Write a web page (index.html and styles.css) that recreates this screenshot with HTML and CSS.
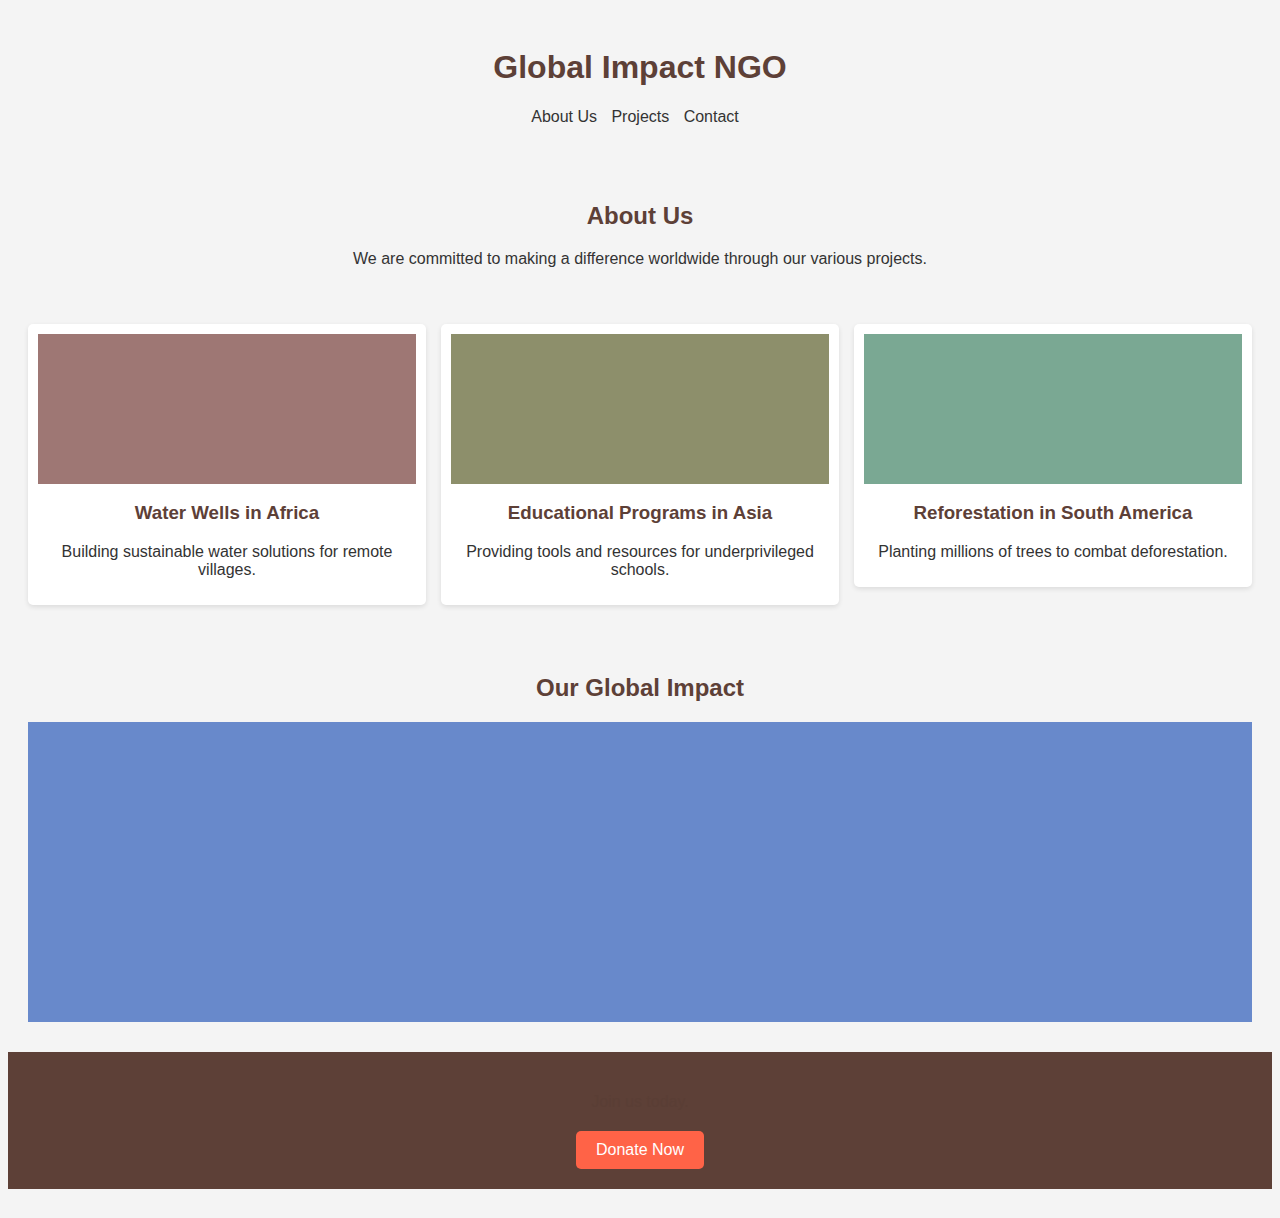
FILE: index.html
```html
<!DOCTYPE html>
<html lang="en">
<head>
<meta charset="utf-8">
<title>Global Impact NGO</title>
<link rel="stylesheet" href="styles.css">
</head>
<body>
<header class="site-header">
  <h1 class="site-title">Global Impact NGO</h1>
  <nav class="site-nav">
    <a href="#about">About Us</a>
    <a href="#projects">Projects</a>
    <a href="#contact">Contact</a>
  </nav>
</header>

<section class="about" id="about">
  <h2 class="section-title">About Us</h2>
  <p>We are committed to making a difference worldwide through our various projects.</p>
</section>

<section class="projects" id="projects">
  <div class="card">
    <div class="card-img img-red"></div>
    <h3 class="card-title">Water Wells in Africa</h3>
    <p class="card-text">Building sustainable water solutions for remote villages.</p>
  </div>
  <div class="card">
    <div class="card-img img-olive"></div>
    <h3 class="card-title">Educational Programs in Asia</h3>
    <p class="card-text">Providing tools and resources for underprivileged schools.</p>
  </div>
  <div class="card">
    <div class="card-img img-green"></div>
    <h3 class="card-title">Reforestation in South America</h3>
    <p class="card-text">Planting millions of trees to combat deforestation.</p>
  </div>
</section>

<section class="impact">
  <h2 class="section-title">Our Global Impact</h2>
  <div class="map"></div>
</section>

<footer class="site-footer" id="contact">
  <p class="footer-text">Join us today.</p>
  <button class="donate" type="button">Donate Now</button>
</footer>
</body>
</html>
```

FILE: styles.css
```css
body {
  margin: 8px;
  background: #f4f4f4;
  font-family: "Liberation Sans", Arial, sans-serif;
  color: #333;
}

.site-header {
  padding: 20px;
  text-align: center;
}

.site-title {
  font-size: 32px;
  margin: 21.44px 0;
  color: #5d4037;
}

.site-nav {
  display: flex;
  justify-content: center;
  gap: 4.4px;
  margin-bottom: 16px;
}

.site-nav a {
  color: #333;
  text-decoration: none;
  font-size: 16px;
  margin-right: 10px;
}

.about {
  padding: 20px;
  text-align: center;
}

.section-title {
  font-size: 24px;
  margin: 19.92px 0;
  color: #5d4037;
  text-align: center;
}

.about p {
  margin: 16px 0;
}

.projects {
  padding: 20px;
  display: grid;
  grid-template-columns: repeat(3, 1fr);
  gap: 15px;
  align-items: start;
}

.card {
  background: #fff;
  padding: 10px;
  border-radius: 5px;
  box-shadow: 0 2px 5px rgba(0, 0, 0, 0.1);
  text-align: center;
}

.card-img {
  height: 150px;
}

.img-red { background: #9e7774; }
.img-olive { background: #8d8f6b; }
.img-green { background: #7aa893; }

.card-title {
  font-size: 18.72px;
  margin: 18.72px 0;
  color: #5d4037;
}

.card-text {
  margin: 16px 0;
}

.impact {
  padding: 29px 20px 30px;
}

.map {
  height: 300px;
  background: #6889cb;
}

.site-footer {
  background: #5d4037;
  padding: 20px;
  text-align: center;
}

.footer-text {
  margin: 21px 0 20px;
  color: #5a3e35;
}

.donate {
  font-family: inherit;
  font-size: 16px;
  color: #fff;
  background: #ff6347;
  border: none;
  border-radius: 5px;
  padding: 10px 20px;
  line-height: 18px;
}
```
